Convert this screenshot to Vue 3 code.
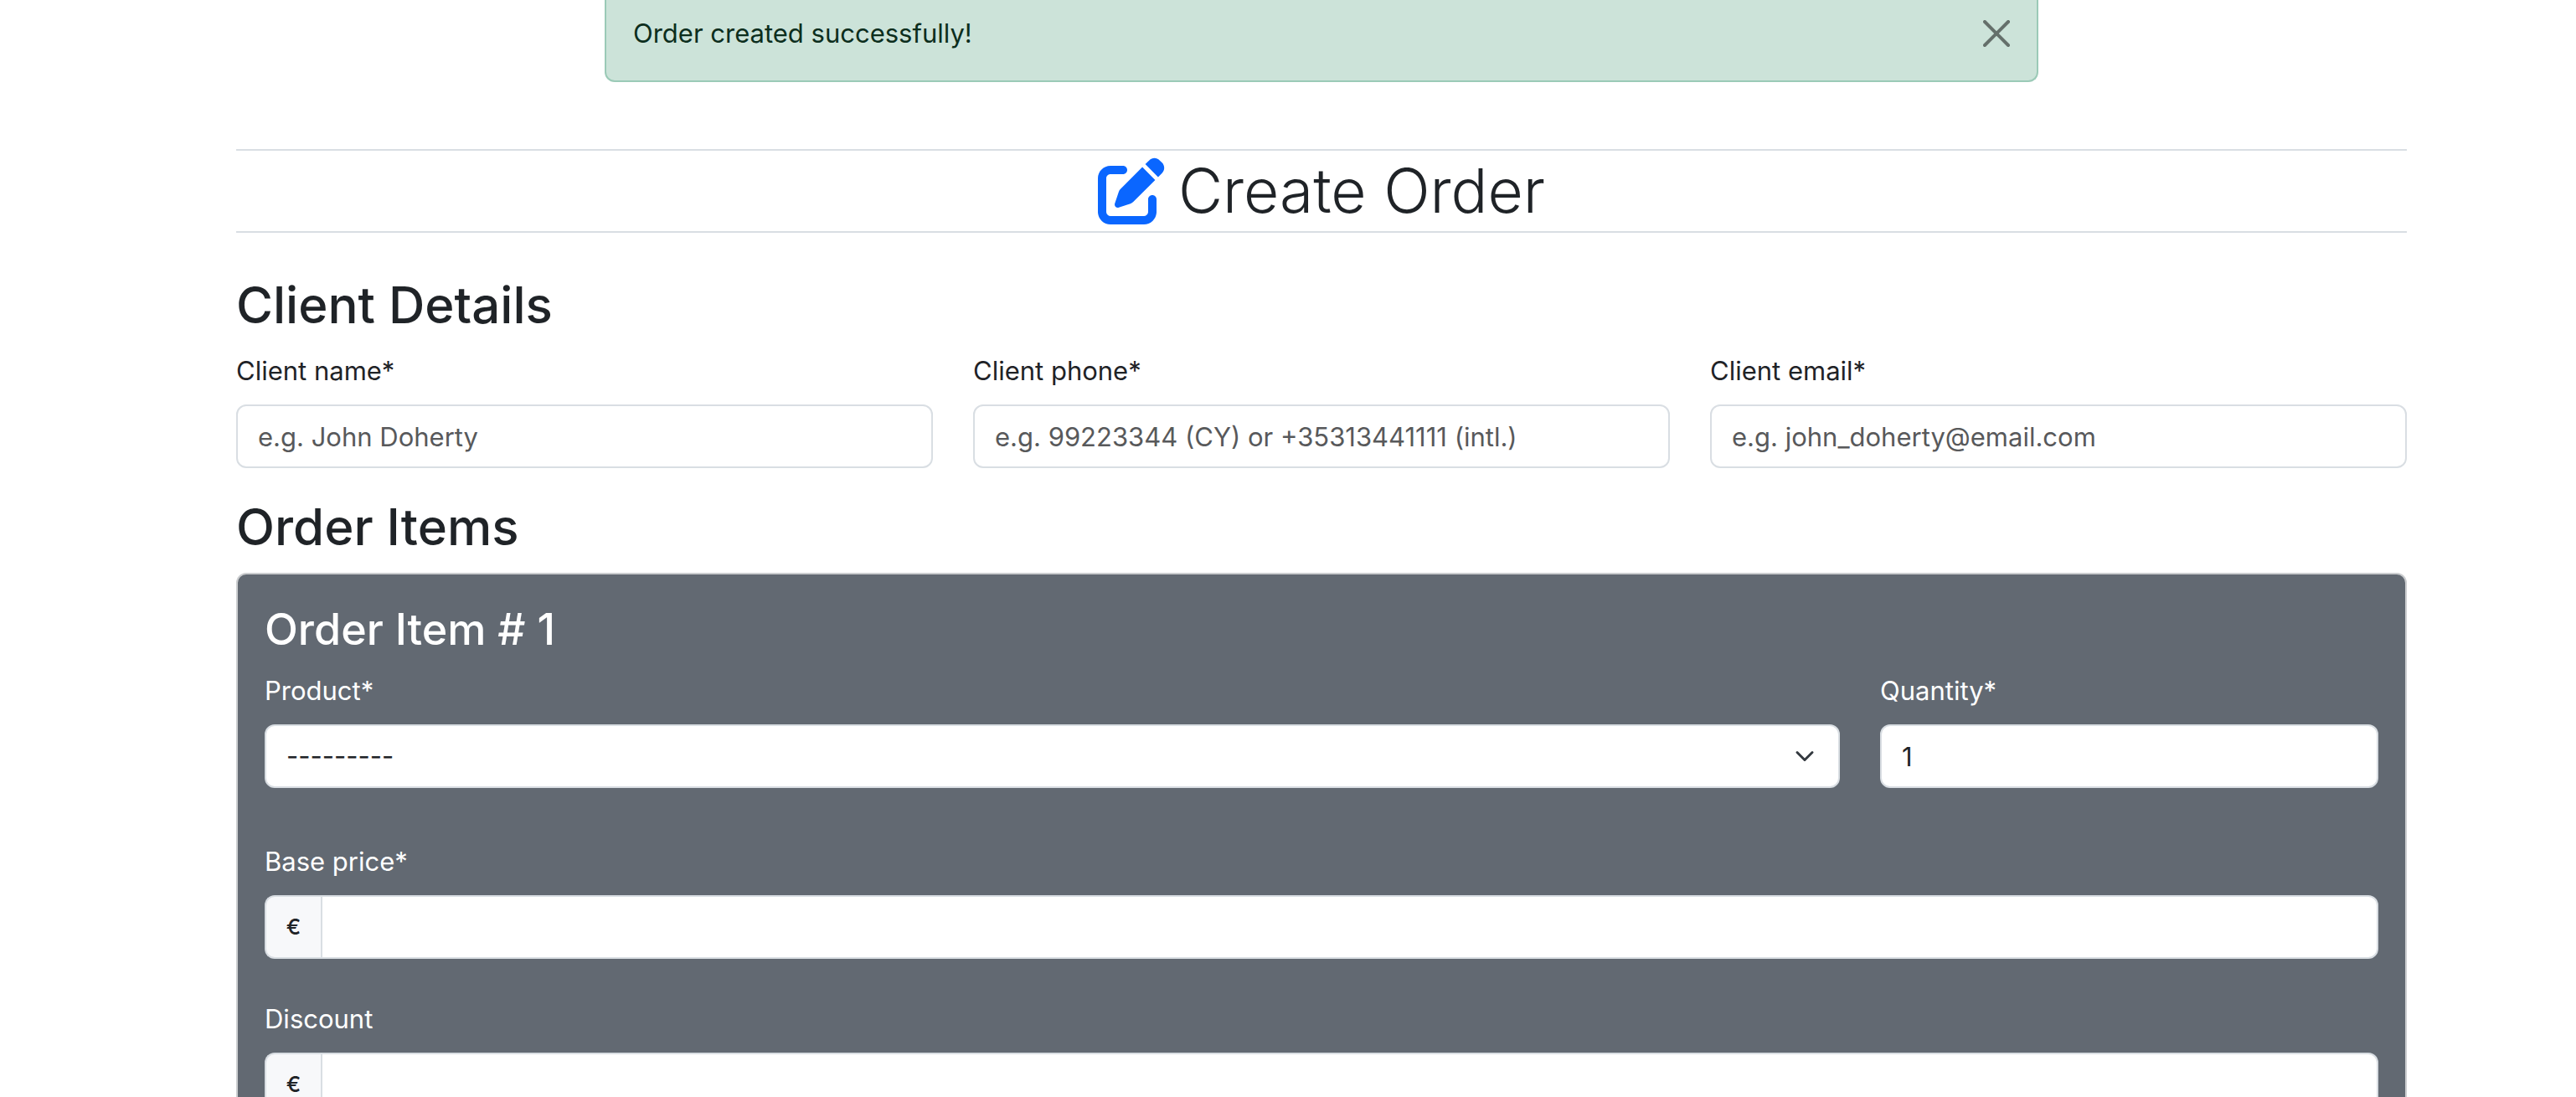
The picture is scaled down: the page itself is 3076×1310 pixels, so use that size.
<script setup>
import { ref, reactive } from 'vue'

const showAlert = ref(true)

const clientFields = reactive([
  { id: 'client-name', label: 'Client name*', type: 'text', placeholder: 'e.g. John Doherty', value: '' },
  { id: 'client-phone', label: 'Client phone*', type: 'tel', placeholder: 'e.g. 99223344 (CY) or +35313441111 (intl.)', value: '' },
  { id: 'client-email', label: 'Client email*', type: 'email', placeholder: 'e.g. john_doherty@email.com', value: '' },
])

const item = reactive({ product: '', quantity: 1 })

const priceFields = reactive([
  { id: 'base-price', label: 'Base price*', value: '' },
  { id: 'discount', label: 'Discount', value: '' },
])
</script>

<template>
  <main class="page">
    <div class="alert-row">
      <div v-if="showAlert" class="alert" role="alert">
        <span>Order created successfully!</span>
        <button type="button" class="close" aria-label="Close" @click="showAlert = false">
          <svg viewBox="0 0 16 16" aria-hidden="true">
            <path d="M.293.293a1 1 0 0 1 1.414 0L8 6.586 14.293.293a1 1 0 1 1 1.414 1.414L9.414 8l6.293 6.293a1 1 0 0 1-1.414 1.414L8 9.414l-6.293 6.293a1 1 0 0 1-1.414-1.414L6.586 8 .293 1.707a1 1 0 0 1 0-1.414" />
          </svg>
        </button>
      </div>
    </div>

    <h1 class="title">
      <svg class="title-icon" viewBox="0 0 512 512" aria-hidden="true">
        <path d="M471.6 21.7c-21.9-21.9-57.3-21.9-79.2 0L362.3 51.7l97.9 97.9 30.1-30.1c21.9-21.9 21.9-57.3 0-79.2L471.6 21.7zm-299.2 220c-6.1 6.1-10.8 13.6-13.5 21.9l-29.6 88.8c-2.9 8.6-.6 18.1 5.8 24.6s15.9 8.7 24.6 5.8l88.8-29.6c8.2-2.7 15.7-7.4 21.9-13.5L437.7 172.3 339.7 74.3 172.4 241.7zM96 64C43 64 0 107 0 160V416c0 53 43 96 96 96H352c53 0 96-43 96-96V320c0-17.7-14.3-32-32-32s-32 14.3-32 32v96c0 17.7-14.3 32-32 32H96c-17.7 0-32-14.3-32-32V160c0-17.7 14.3-32 32-32h96c17.7 0 32-14.3 32-32s-14.3-32-32-32H96z" />
      </svg>
      <span>Create Order</span>
    </h1>

    <form @submit.prevent>
      <h2>Client Details</h2>
      <div class="grid client">
        <div v-for="field in clientFields" :key="field.id" class="third">
          <label :for="field.id">{{ field.label }}</label>
          <input :id="field.id" v-model="field.value" class="control" :type="field.type" :placeholder="field.placeholder" />
        </div>
      </div>

      <h2>Order Items</h2>
      <section class="card">
        <h3>Order Item # 1</h3>
        <div class="grid product-row">
          <div class="product">
            <label for="product">Product*</label>
            <div class="select-wrap">
              <select id="product" v-model="item.product" class="control">
                <option value="">---------</option>
              </select>
              <svg class="chevron" viewBox="0 0 16 16" aria-hidden="true"><path d="m2 5 6 6 6-6" /></svg>
            </div>
          </div>
          <div class="quantity">
            <label for="quantity">Quantity*</label>
            <input id="quantity" v-model="item.quantity" class="control" type="number" min="1" />
          </div>
        </div>

        <div v-for="field in priceFields" :key="field.id" class="price">
          <label :for="field.id">{{ field.label }}</label>
          <div class="group">
            <span class="addon">€</span>
            <input :id="field.id" v-model="field.value" class="control" type="number" step="any" />
          </div>
        </div>
      </section>
    </form>
  </main>
</template>

<style>
body {
  margin: 0;
  background: #fff;
}
</style>

<style scoped>
.page,
.page * {
  box-sizing: border-box;
}

.page {
  height: 100vh;
  overflow: hidden;
  padding: 0 202px 0 282px;
  font-family: Inter, "Liberation Sans", sans-serif;
  font-size: 31px;
  line-height: 48px;
  color: #1f2327;
}

.alert-row {
  display: flex;
  justify-content: center;
  height: 178px;
}

.alert {
  display: flex;
  align-items: flex-start;
  justify-content: space-between;
  width: calc((100% + 48px) * 2 / 3 - 48px);
  height: 98px;
  padding: 16px 32px 32px;
  border: 2px solid #9bcab7;
  border-top: 0;
  border-radius: 0 0 12px 12px;
  background: #cce3d9;
  color: #0c2e1d;
}

.close {
  display: flex;
  margin: 8px 0;
  padding: 0;
  border: 0;
  background: transparent;
  color: #000;
  opacity: 0.5;
  cursor: pointer;
}

.close svg {
  width: 32px;
  height: 32px;
  fill: currentColor;
}

.title {
  display: flex;
  align-items: center;
  justify-content: center;
  gap: 16px;
  margin: 0 0 48px;
  border: solid #d9dee3;
  border-width: 2px 0;
  font-size: 73px;
  font-weight: 300;
  line-height: 96px;
}

.title-icon {
  width: 80px;
  height: 80px;
  fill: #0a66ff;
}

h2,
h3 {
  margin: 0 0 16px;
  font-weight: 500;
}

h2 {
  font-size: 60px;
  line-height: 77px;
}

h3 {
  font-size: 52px;
  line-height: 67px;
}

.grid {
  display: grid;
  grid-template-columns: repeat(12, 1fr);
  column-gap: 48px;
}

.client {
  margin-bottom: 32px;
}

.third {
  grid-column: span 4;
}

.product {
  grid-column: span 9;
}

.quantity {
  grid-column: span 3;
}

label {
  display: block;
  margin-bottom: 16px;
}

.control {
  display: block;
  width: 100%;
  min-width: 0;
  height: 76px;
  margin: 0;
  padding: 0 24px;
  border: 2px solid #d9dee3;
  border-radius: 12px;
  outline: 0;
  appearance: none;
  background: #fff;
  color: #1f2327;
  font: inherit;
}

.control[type="number"] {
  appearance: textfield;
}

.control:focus {
  border-color: #86b7fe;
}

.control::placeholder {
  color: #58595b;
  opacity: 1;
}

.card {
  padding: 32px;
  border: 2px solid #cbcdcf;
  border-radius: 12px;
  background: #626972;
  color: #fff;
}

.product-row {
  margin-bottom: 64px;
}

.select-wrap {
  display: grid;
  align-items: center;
}

.select-wrap > * {
  grid-area: 1 / 1;
}

.chevron {
  justify-self: end;
  width: 24px;
  height: 24px;
  margin-right: 30px;
  fill: none;
  stroke: #343a40;
  stroke-width: 2;
  stroke-linecap: round;
  stroke-linejoin: round;
  pointer-events: none;
}

.price {
  margin-bottom: 48px;
}

.group {
  display: flex;
}

.addon {
  display: flex;
  flex: none;
  align-items: center;
  justify-content: center;
  width: 67px;
  border: 2px solid #d9dee3;
  border-right: 0;
  border-radius: 12px 0 0 12px;
  background: #f7f8fa;
  color: #1f2327;
  font-size: 26px;
  font-weight: 500;
}

.group .control {
  flex: 1;
  border-radius: 0 12px 12px 0;
}
</style>
